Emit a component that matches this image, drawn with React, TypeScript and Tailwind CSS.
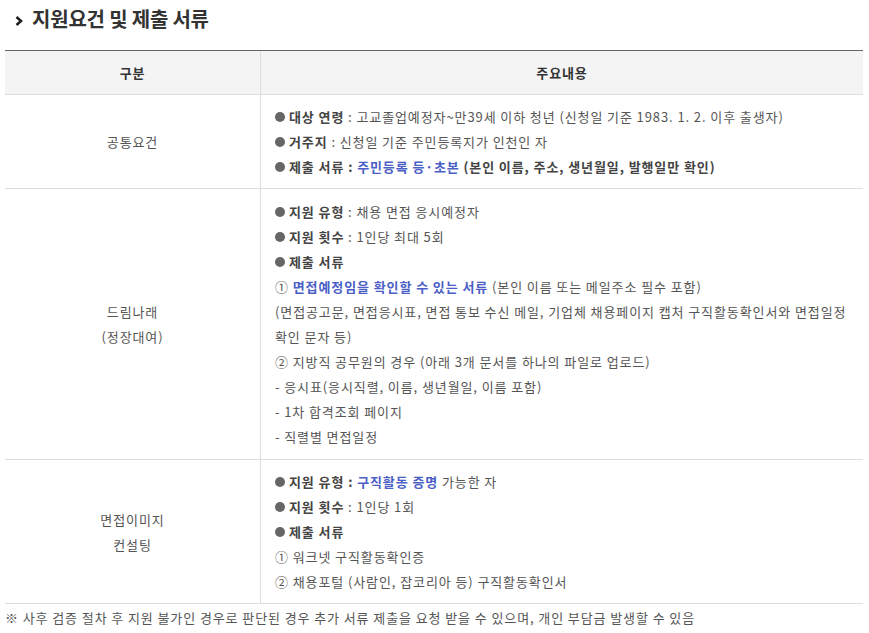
const blue = "text-[#4a60c6]"

function Bullet({ label, children }: { label: string; children?: React.ReactNode }) {
  return (
    <div className="flex items-center whitespace-nowrap">
      <span className="mr-[4px] inline-block h-[10px] w-[10px] rounded-full bg-[#666]" />
      <b className="font-bold text-[#444]">{label}</b>
      {children}
    </div>
  )
}

function Row({ title, children, pad = "py-[9px]" }: { title: React.ReactNode; children: React.ReactNode; pad?: string }) {
  return (
    <div className="grid grid-cols-[256px_1fr] border-b border-[#ddd]">
      <div className="flex items-center justify-center border-r border-[#ddd] text-center text-[#555]">
        <div>{title}</div>
      </div>
      <div className={`${pad} pl-[14px] pr-[6px] text-[#555]`}>{children}</div>
    </div>
  )
}

export default function App() {
  return (
    <div className="h-[633px] w-[869px] bg-white text-[13px] leading-[25px] tracking-[0.9px] font-['Noto_Sans_CJK_KR','Noto_Sans',sans-serif]">
      {/* Title */}
      <div className="flex h-[38px] items-center pl-[15px]">
        <svg width="8" height="10" viewBox="0 0 8 10" className="mr-[9px] mt-[3px]">
          <path d="M1.5 1 L6 5 L1.5 9" fill="none" stroke="#222" strokeWidth="2.6" />
        </svg>
        <h2 className="text-[20px] font-bold leading-none tracking-[-0.2px] text-[#333]">지원요건 및 제출 서류</h2>
      </div>

      <div className="mx-[5px] mt-[12px] w-[858px] border-t border-[#666]">
        {/* header */}
        <div className="grid h-[44px] grid-cols-[256px_1fr] border-b border-[#ddd] bg-[#f4f4f4] font-bold text-[#333]">
          <div className="flex items-center justify-center border-r border-[#ddd]">구분</div>
          <div className="flex items-center justify-center">주요내용</div>
        </div>

        <Row title="공통요건">
          <Bullet label="대상 연령">
            <span>&nbsp;: 고교졸업예정자~만39세 이하 청년 (신청일 기준 1983. 1. 2. 이후 출생자)</span>
          </Bullet>
          <Bullet label="거주지">
            <span>&nbsp;: 신청일 기준 주민등록지가 인천인 자</span>
          </Bullet>
          <Bullet label="제출 서류 : ">
            <b className={`font-bold ${blue}`}>&nbsp;주민등록 등·초본</b>
            <b className="font-bold text-[#444]">&nbsp;(본인 이름, 주소, 생년월일, 발행일만 확인)</b>
          </Bullet>
        </Row>

        <Row
          pad="py-[10px]"
          title={
            <>
              <div>드림나래</div>
              <div>(정장대여)</div>
            </>
          }
        >
          <Bullet label="지원 유형">
            <span>&nbsp;: 채용 면접 응시예정자</span>
          </Bullet>
          <Bullet label="지원 횟수">
            <span>&nbsp;: 1인당 최대 5회</span>
          </Bullet>
          <Bullet label="제출 서류" />
          <div className="whitespace-nowrap">
            ① <b className={`font-bold ${blue}`}>면접예정임을 확인할 수 있는 서류</b> (본인 이름 또는 메일주소 필수 포함)
          </div>
          <div className="whitespace-nowrap">(면접공고문, 면접응시표, 면접 통보 수신 메일, 기업체 채용페이지 캡처 구직활동확인서와 면접일정</div>
          <div>확인 문자 등)</div>
          <div>② 지방직 공무원의 경우 (아래 3개 문서를 하나의 파일로 업로드)</div>
          <div>- 응시표(응시직렬, 이름, 생년월일, 이름 포함)</div>
          <div>- 1차 합격조회 페이지</div>
          <div>- 직렬별 면접일정</div>
        </Row>

        <Row
          pad="py-[9px]"
          title={
            <>
              <div>면접이미지</div>
              <div>컨설팅</div>
            </>
          }
        >
          <Bullet label="지원 유형 : ">
            <b className={`font-bold ${blue}`}>&nbsp;구직활동 증명</b>
            <span>&nbsp;가능한 자</span>
          </Bullet>
          <Bullet label="지원 횟수">
            <span>&nbsp;: 1인당 1회</span>
          </Bullet>
          <Bullet label="제출 서류" />
          <div>① 워크넷 구직활동확인증</div>
          <div>② 채용포털 (사람인, 잡코리아 등) 구직활동확인서</div>
        </Row>

        <p className="whitespace-nowrap pt-[1px] text-[#555]">
          ※ 사후 검증 절차 후 지원 불가인 경우로 판단된 경우 추가 서류 제출을 요청 받을 수 있으며, 개인 부담금 발생할 수 있음
        </p>
      </div>
    </div>
  )
}
